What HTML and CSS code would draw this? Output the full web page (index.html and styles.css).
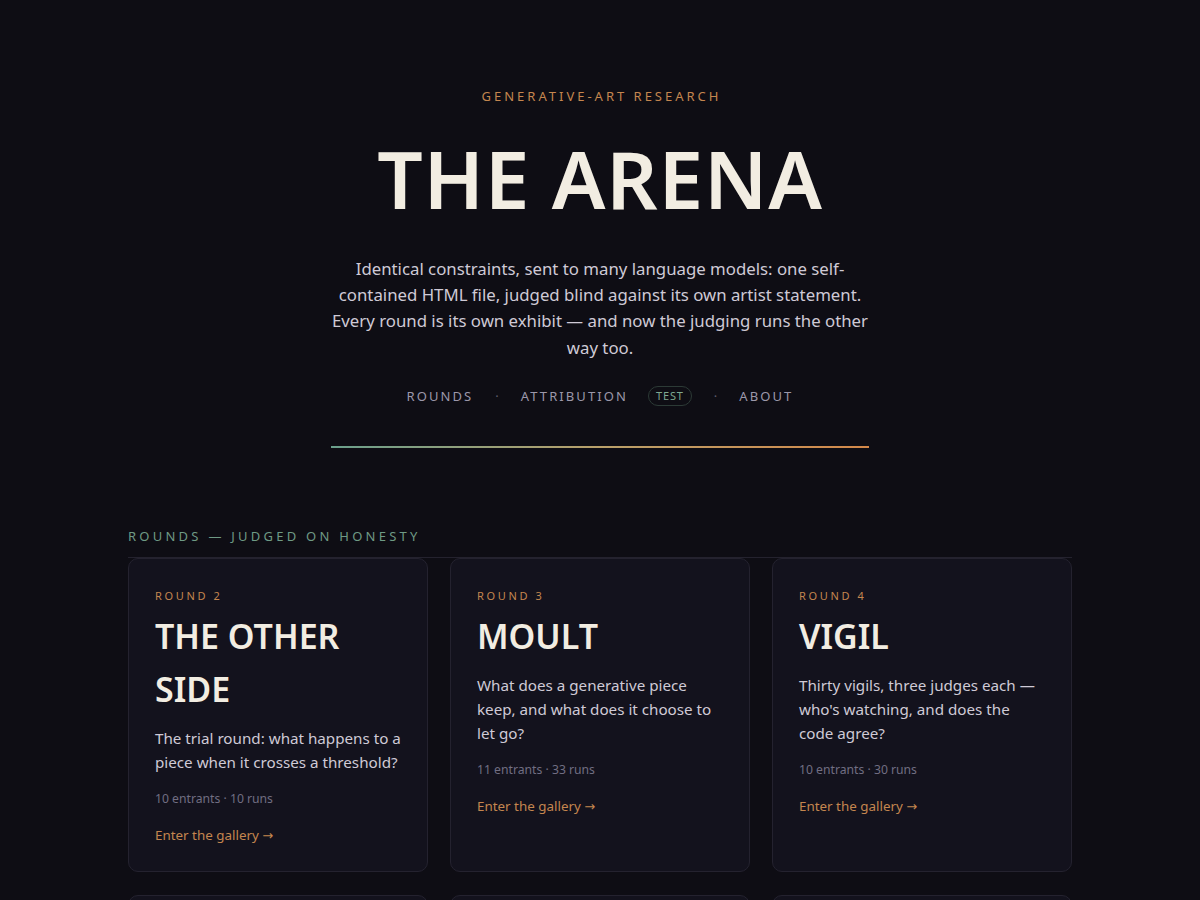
FILE: index.html
```html
<!DOCTYPE html>
<html lang="en">
<head>
<meta charset="utf-8">
<title>The Arena</title>
<link rel="stylesheet" href="styles.css">
</head>
<body>
<header class="hero">
  <p class="eyebrow">Generative-art research</p>
  <h1 class="title">THE ARENA</h1>
  <p class="lede">Identical constraints, sent to many language models: one self-contained HTML file, judged blind against its own artist statement. Every round is its own exhibit — and now the judging runs the other way too.</p>
  <nav class="nav">
    <a class="nav-link" href="#rounds">Rounds</a>
    <span class="nav-dot">·</span>
    <a class="nav-link" href="#attribution">Attribution</a>
    <span class="badge">TEST</span>
    <span class="nav-dot">·</span>
    <a class="nav-link" href="#about">About</a>
  </nav>
  <div class="rule"></div>
</header>

<main class="rounds" id="rounds">
  <h2 class="section-title">Rounds — judged on honesty</h2>
  <div class="grid">
    <article class="card">
      <p class="card-label">Round 2</p>
      <h3 class="card-title">THE OTHER SIDE</h3>
      <p class="card-desc">The trial round: what happens to a piece when it crosses a threshold?</p>
      <p class="card-meta">10 entrants · 10 runs</p>
      <a class="card-link" href="#">Enter the gallery <span class="arrow">→</span></a>
    </article>
    <article class="card">
      <p class="card-label">Round 3</p>
      <h3 class="card-title">MOULT</h3>
      <p class="card-desc">What does a generative piece keep, and what does it choose to let go?</p>
      <p class="card-meta">11 entrants · 33 runs</p>
      <a class="card-link" href="#">Enter the gallery <span class="arrow">→</span></a>
    </article>
    <article class="card">
      <p class="card-label">Round 4</p>
      <h3 class="card-title">VIGIL</h3>
      <p class="card-desc">Thirty vigils, three judges each — who's watching, and does the code agree?</p>
      <p class="card-meta">10 entrants · 30 runs</p>
      <a class="card-link" href="#">Enter the gallery <span class="arrow">→</span></a>
    </article>
    <article class="card">
      <p class="card-label">Round 5</p>
      <h3 class="card-title">TIDE</h3>
      <p class="card-desc">What returns, and what is changed by the returning?</p>
      <p class="card-meta">10 entrants · 30 runs</p>
      <a class="card-link" href="#">Enter the gallery <span class="arrow">→</span></a>
    </article>
    <article class="card">
      <p class="card-label">Round 6</p>
      <h3 class="card-title">ECHO</h3>
      <p class="card-desc">A piece that answers itself, slightly wrong each time.</p>
      <p class="card-meta">10 entrants · 30 runs</p>
      <a class="card-link" href="#">Enter the gallery <span class="arrow">→</span></a>
    </article>
    <article class="card">
      <p class="card-label">Round 7</p>
      <h3 class="card-title">RELIC</h3>
      <p class="card-desc">What survives when the context is gone?</p>
      <p class="card-meta">10 entrants · 30 runs</p>
      <a class="card-link" href="#">Enter the gallery <span class="arrow">→</span></a>
    </article>
  </div>
</main>
</body>
</html>
```

FILE: styles.css
```css
* { box-sizing: border-box; }

html, body {
  margin: 0;
  padding: 0;
  background: #0e0d14;
}

body {
  font-family: "Noto Sans", "Open Sans", "DejaVu Sans", sans-serif;
  color: #d6d2de;
  line-height: 1.6;
}

p, h1, h2, h3 { margin: 0; }

a { text-decoration: none; }

.hero {
  display: flex;
  flex-direction: column;
  align-items: center;
  text-align: center;
  padding-top: 86px;
}

.eyebrow {
  font-size: 13px;
  letter-spacing: 0.23em;
  text-transform: uppercase;
  color: #c4864f;
  margin-right: -0.23em;
}

.title {
  margin-top: 27px;
  font-size: 80px;
  font-weight: 600;
  line-height: 1.1;
  letter-spacing: 0.01em;
  color: #f2ede2;
}

.lede {
  margin-top: 34px;
  max-width: 540px;
  font-size: 16.8px;
  line-height: 26.3px;
  color: #cfcad6;
}

.nav {
  margin-top: 24px;
  display: flex;
  align-items: center;
  gap: 20px;
  height: 22px;
}

.nav-link {
  font-size: 13px;
  letter-spacing: 0.16em;
  text-transform: uppercase;
  color: #9c98aa;
}

.nav-dot {
  font-size: 13px;
  color: #5f5c6c;
  padding: 0 2px;
}

.badge {
  font-size: 11px;
  letter-spacing: 0.08em;
  color: #7ea890;
  border: 1px solid #2c3a36;
  border-radius: 999px;
  padding: 1px 7px;
  line-height: 16px;
}

.rule {
  margin-top: 39px;
  width: 538px;
  height: 2px;
  background: linear-gradient(90deg, #6a9f8c 0%, #b9a06a 50%, #d3884a 100%);
}

.rounds {
  width: 944px;
  margin: 78px auto 0;
}

.section-title {
  font-size: 13px;
  font-weight: 400;
  letter-spacing: 0.25em;
  text-transform: uppercase;
  color: #6e9a85;
  padding-bottom: 10px;
  border-bottom: 1px solid #24222e;
}

.grid {
  display: grid;
  grid-template-columns: repeat(3, 300px);
  gap: 23px 22px;
}

.card {
  background: #13121d;
  border: 1px solid #24222f;
  border-radius: 10px;
  padding: 28px 26px 24px;
  display: flex;
  flex-direction: column;
}

.card-label {
  font-size: 11px;
  letter-spacing: 0.24em;
  text-transform: uppercase;
  color: #c4864f;
}

.card-title {
  margin-top: 6px;
  font-size: 34px;
  font-weight: 600;
  line-height: 53px;
  color: #f2ede2;
}

.card-desc {
  margin-top: 10px;
  font-size: 15.2px;
  line-height: 24px;
  color: #cfcad6;
}

.card-meta {
  margin-top: 15px;
  font-size: 12.2px;
  color: #716e82;
}

.card-link {
  margin-top: 16px;
  font-size: 13.4px;
  line-height: 1.6;
  color: #c4864f;
}

.arrow {
  font-family: "DejaVu Sans", sans-serif;
  font-size: 13px;
}
```
